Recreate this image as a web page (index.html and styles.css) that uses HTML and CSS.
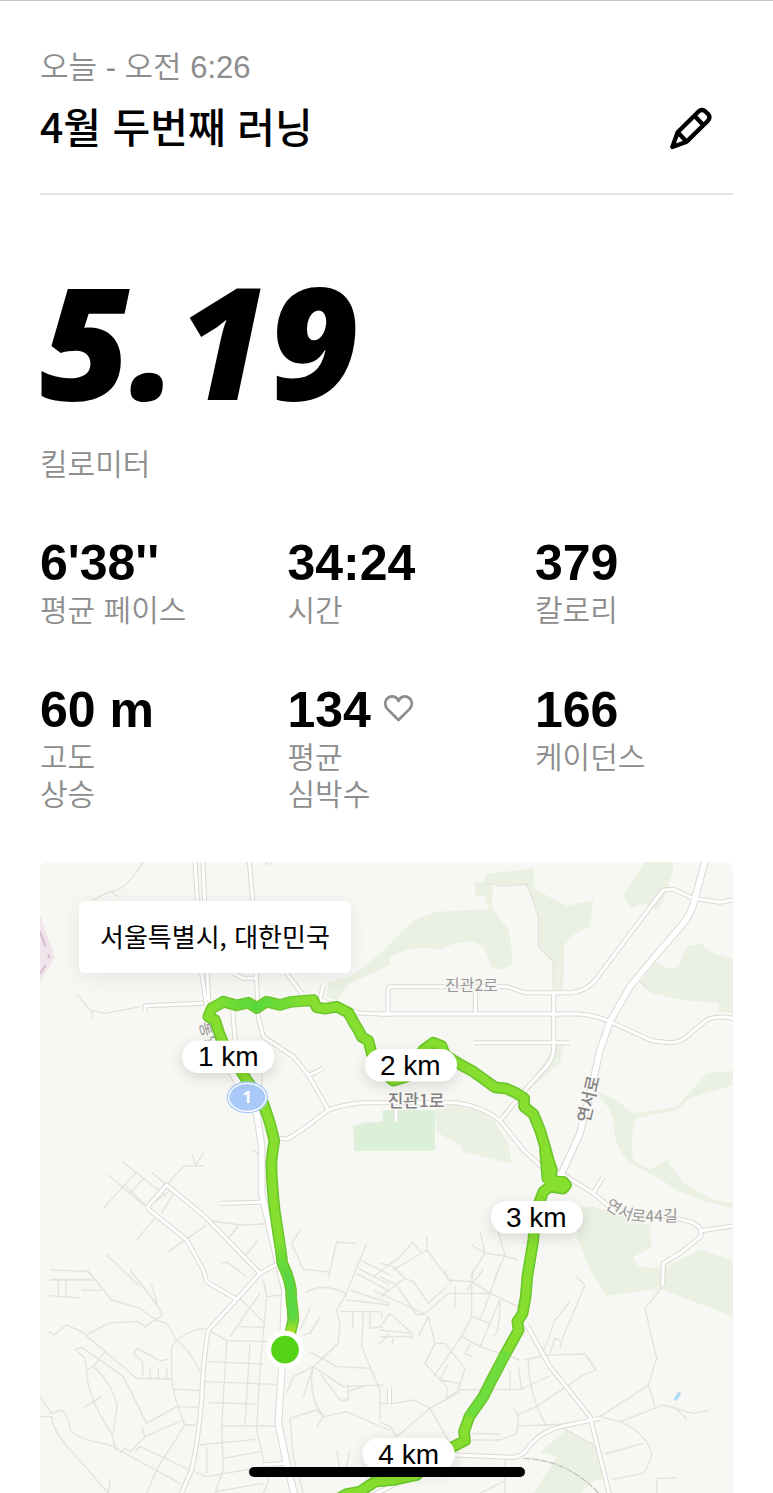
FILE: index.html
```html
<!DOCTYPE html>
<html lang="ko">
<head>
<meta charset="utf-8">
<meta name="viewport" content="width=device-width, initial-scale=1">
<title>4월 두번째 러닝</title>
<link rel="stylesheet" href="styles.css">
</head>
<body>
<main class="run">
  <header class="run-header">
    <div class="run-heading">
      <p class="run-date">오늘 - 오전 6:26</p>
      <h1 class="run-title">4월 두번째 러닝</h1>
    </div>
    <button class="edit-button" type="button" aria-label="이름 편집">
      <svg class="edit-icon" viewBox="84 79 135 135" aria-hidden="true">
        <path d="M97 202 113 158 175 96Q186 86 197 96L204 103Q213 113 203 124L140 186ZM113 158 140 186M163 108 190 136"/>
      </svg>
    </button>
  </header>

  <section class="distance">
    <p class="distance-value">5.19</p>
    <p class="label">킬로미터</p>
  </section>

  <section class="stats">
    <div class="stat"><p class="stat-value">6'38''</p><p class="label">평균 페이스</p></div>
    <div class="stat"><p class="stat-value">34:24</p><p class="label">시간</p></div>
    <div class="stat"><p class="stat-value">379</p><p class="label">칼로리</p></div>
    <div class="stat"><p class="stat-value">60 m</p><p class="label">고도<br>상승</p></div>
    <div class="stat">
      <p class="stat-value">134
        <svg class="heart-icon" viewBox="1088 518 92 88" aria-hidden="true"><path d="M1134 597 1100 563Q1089 549 1097 535 1106 523 1120 526 1130 529 1134 539 1138 529 1148 526 1162 523 1171 535 1179 549 1168 563Z"/></svg>
      </p>
      <p class="label">평균<br>심박수</p>
    </div>
    <div class="stat"><p class="stat-value">166</p><p class="label">케이던스</p></div>
  </section>

  <section class="map" aria-label="러닝 경로">
    <svg class="map-canvas" viewBox="30 36 2079 1893" preserveAspectRatio="xMidYMin slice">
      <defs>
        <g id="streets">
          <path d="M495 34 515 370 530 470M519 34 532 370 536 450M658 34 668 152 680 400 685 500 700 560 790 620 835 675 895 780M345 485V467L520 460M770 370 815 430M880 405 870 450 990 490 1080 493M610 370 640 385H680M608 480 615 570"/>
          <g transform="translate(1050)">
            <path d="M24 490V420Q24 410 35 410H380L435 428H570Q620 425 650 385L770 225 850 120 880 118 940 145 1020 157 1060 150M0 492H600Q650 497 690 515L815 572 870 578Q900 578 920 560L980 510Q1010 495 1060 505M286 428V490M521 428V600Q520 630 490 660L440 715 360 812M283 578H568"/>
          </g>
          <g transform="translate(0 630)">
            <path d="M740 235 770 237Q800 225 895 150 950 130 1000 128H1280Q1360 140 1410 182L1480 270 1540 325 1610 350 1690 400 1750 450 1940 475 1980 485Q2020 500 2012 530L1950 580 1900 610 1898 675M2012 512 2110 498M1690 400 1720 350M1098 150V185M840 45 880 25M572 430 695 427M350 443 410 375 525 470 690 640M350 443 470 540 520 630 530 665 620 718 690 640 745 610"/>
          </g>
          <g transform="translate(0 1260)">
            <path d="M620 88 535 180Q520 260 515 390 505 510 485 600L450 680M700 585 765 580M1490 165 1560 290 1680 440 1740 680M1278 555 1450 562Q1480 560 1500 525 1540 480 1600 468L1710 445M1078 350V400M1000 690 1160 610"/>
          </g>
        </g>
        <g id="avenues">
          <path d="M595 650 680 790 695 890V1030L745 1240 765 1320 755 1560 745 1720 770 1840 795 1940"/>
        </g>
        <path id="yeonseo" d="M2025 34 1995 145Q1985 190 1960 220L1870 325 1800 410 1740 515 1710 600 1690 690 1650 850 1595 970"/>
        <path id="route" d="M778 1465 784 1435 790 1410 788 1380 784 1350 783 1320 778 1295 770 1270 757 1240 752 1200 746 1160 740 1120 734 1080 730 1040 726 990 724 940 728 905 733 872 720 820 700 760 650 690 625 650 580 580 568 550 555 510 535 500 545 475 565 464 580 455 620 466 655 458 680 474 710 455 750 465 780 456 850 450 860 472 885 476 920 470 955 488 970 515 988 545 995 560 1015 572 1025 610 1050 660 1090 692 1130 680 1180 600 1210 578 1235 588 1245 615 1285 640 1330 665 1395 712 1430 716 1460 730 1483 745 1482 770 1510 792 1530 840 1545 890 1556 930 1566 960 1562 990 1600 995 1608 1005 1600 1016 1560 1010 1540 1025 1515 1090 1510 1170 1492 1280 1487 1340 1478 1390 1462 1415 1466 1440 1430 1505 1385 1590 1360 1640 1318 1700 1302 1745 1305 1772 1270 1790 1200 1830 1160 1875 1090 1890 1035 1895 990 1925 950 1932 900 1960"/>
        <linearGradient id="pace" gradientUnits="userSpaceOnUse" x1="0" y1="1455" x2="0" y2="1160">
          <stop offset="0" stop-color="#c2e225"/><stop offset=".18" stop-color="#5cd843"/><stop offset=".6" stop-color="#59d643"/><stop offset="1" stop-color="#86df2e"/>
        </linearGradient>
        <linearGradient id="pace-north" gradientUnits="userSpaceOnUse" x1="540" y1="0" x2="840" y2="0">
          <stop offset="0" stop-color="#86df2e"/><stop offset=".45" stop-color="#58d83e"/><stop offset="1" stop-color="#86df2e"/>
        </linearGradient>
        <path id="yeonseo-44" d="M1724 1072Q1780 1116 1840 1116L1950 1114"/>
        <filter id="pill-shadow" x="-30%" y="-50%" width="160%" height="230%">
          <feDropShadow dx="0" dy="12" stdDeviation="20" flood-opacity=".14"/>
        </filter>
      </defs>

      <g class="woods">
        <path d="M895 395 960 380 1080 290V345L960 400 920 450 890 440Z"/>
        <g transform="translate(1050)">
          <path d="M0 345 20 330Q90 280 180 298 290 245 320 310 335 360 350 360L395 348Q400 300 385 240 350 190 335 170L340 105H320L440 103Q455 130 475 200L478 290 520 340 525 425H550L552 290Q570 250 630 232L640 150 560 168 460 115 463 55 318 72 312 95 285 100V137H312L325 178 170 185 105 210 40 270 0 315Z"/>
          <path d="M795 34H880V60L850 150 835 180 790 160 755 175 730 135ZM920 290 960 280 1000 310 1060 328V490L1018 485 1015 458 920 452 815 430 780 395 830 335Q860 365 895 350ZM525 585H550L540 640 430 735 440 715Z"/>
        </g>
        <g transform="translate(1050 630)">
          <path d="M165 150 185 135Q300 140 340 180L385 250 395 312 250 275 245 260 170 215ZM650 95Q700 110 760 160L890 140 980 40 1060 32V75L930 115 890 150 770 175Q745 230 760 300L810 330 860 300 910 370 1000 420 1060 430V445L980 425 900 395 820 345 750 310Q700 260 700 180L690 150ZM600 440H640L810 495 815 560 760 590 775 620 850 625 960 570 1060 600V770L850 690H800L680 708 630 630 590 530Z"/>
          <path d="M560 1110 640 1150 680 1255 640 1262 600 1300H460L530 1190 480 1175Z"/>
        </g>
      </g>
      <path class="park" d="M970 830 1000 818 1058 815V780H1215V902H972Z"/>
      <g class="rail-yard"><path d="M30 195 75 320 30 395Z"/><path class="rail" d="M30 245 47 290M54 312 60 326M47 345 30 370"/></g>

      <g class="lanes">
        <path d="M340 36Q290 120 240 125L185 152M245 125 265 143M140 430 180 480 225 490 330 470M187 480V508M710 34V45M722 34V45"/>
        <path transform="translate(1050)" d="M320 100 365 108 440 103 455 140 475 200V290L520 335V425M780 395 802 418"/>
        <g transform="translate(0 630)">
          <path d="M275 303 410 410M235 345 395 480M220 445 320 335M285 375 350 440M300 400 340 355M363 335 410 375 460 318H520M498 318 487 283M498 315 522 277M355 440 435 380M395 460 430 400M320 538 375 475M412 577 530 495M525 480 630 495 705 492M590 540 625 498M645 588 683 542M575 612 590 605 650 650M228 583 330 680M62 630 172 634 200 665M62 658H182M665 270 685 280M695 40V80M785 550 820 628 895 636M895 655 920 546 978 550M940 720 1010 550M990 600 1080 645M985 625 1080 675M980 640 1080 695M785 550 812 508"/>
        </g>
        <g transform="translate(0 1260)">
          <path d="M60 30H190M85 30V78M108 30V80M58 77 152 84M155 60 215 62M172 0 245 90 330 115 375 148 395 140Q400 130 370 90L300 0M363 40 382 100M57 185 70 195 110 165 155 185 320 325 425 327V265Q420 230 440 210L410 160 375 150 345 170 325 155 240 158 170 193M440 210Q480 180 525 175M440 210Q480 240 510 305M338 320V275L310 250 322 235 390 272 415 268M360 295V325M385 295V325M410 295V325M135 238 165 265 170 300Q170 380 245 490L258 540M135 238 155 232 280 320 350 460 440 410M170 300 190 290Q240 330 262 405L250 490M190 290 225 245M162 412 215 380M30 380 65 430 95 420Q120 440 120 480 150 510 240 525L450 640M30 440H65Q70 490 130 550L235 669M270 550 285 535 300 545 345 500 335 470M315 545 330 530 480 600 530 620 700 590M345 500 460 450M350 669 385 590 465 465 495 465M425 330Q435 400 465 465M430 357 510 362M440 410 505 412M240 630 235 669"/>
          <path d="M700 30 710 80 690 300 680 480 715 635 700 669M710 80 755 75M630 85 705 160M690 70 600 200M535 180 590 212 720 215M625 170 705 172M590 212 575 470 580 600 555 669M535 275 700 282M525 335 735 343M535 398 680 402M660 220 645 465M575 468H735M505 525 675 508M580 565 690 545M530 530V610M555 665 700 640M825 70Q870 35 950 70L920 120 930 160 925 220 850 290 820 380M930 125H1055V145M968 125V175M1000 125 995 230 1050 360M1020 125V175L1060 170M1080 190 1045 225M870 140 840 190 820 195M840 115 810 180M840 245 920 290 1020 295M850 290 940 350 1060 345M850 290Q830 370 880 440L860 470M770 370 790 320 850 290M780 445 860 420 880 440 950 425 1040 465 1080 480M780 445 790 560 820 669M870 310 930 390H955V340M950 365 1000 350M920 540 930 600M960 540 945 610M950 90 1080 105M960 60 1080 100M1050 360V450M1080 500 1000 560"/>
        </g>
        <g transform="translate(1050 1260)">
          <path d="M0 20 50 45 110 135 135 132 205 70H330L415 110M0 80 75 25 100 35 145 100 200 50M-20 60 130 130M75 25 40 -10 0 -20M0 180 95 190V210M0 200H95M30 130 95 190M38 205V225M30 130 0 170M115 200 145 140 165 220 195 220 255 295 235 360 200 385V350L135 280 165 220M205 280 180 330 240 340M195 0 205 30 275 35 330 70 355 0M225 50V115M275 40V140L330 160 300 230 245 200 275 140M245 200 160 320M300 230 420 270M270 220 255 250 275 260M300 230 360 90M360 90Q360 190 340 200M330 70 300 150M280 0 275 35M240 360 420 358 510 318M390 305V355M415 290 425 360M445 270Q445 370 500 470M435 270 500 255 615 252 648 300 610 315 470 410 410 435M400 415 415 435 410 490 360 510H275M265 490 360 492M415 468 600 460M0 400 40 400 100 390 150 415 240 365M150 415 210 520M0 455 30 470 50 500 150 415M490 245 525 150 570 95M510 250 525 205 545 215 540 235M545 210 615 45 590 20"/>
          <path d="M850 15 840 60 795 115 830 265 805 345 660 440M805 345 825 410M660 440 720 455 850 405 940 430 985 422M885 412 920 447M720 455Q800 490 815 550 810 580 790 610L695 628M675 552 790 520M830 669V625L890 624M550 475 640 525M375 570V669M380 630 300 669M310 0 260 60"/>
          <path d="M100 -85 60 -40 -20 20M140 -100V-60L40 0M140 -60 215 40M95 -85 125 -50M275 -75 315 -50 375 -42 415 -30M300 -115 315 -50 270 20M355 -115 375 -42 345 20M430 -80 500 -120"/>
        </g>
      </g>
      <path class="railway" d="M1480 1825Q1620 1830 1715 1940"/>
      <path class="water" d="M1935 1650 1950 1628"/>

      <use class="street-edge" href="#streets"/>
      <use class="avenue-edge" href="#avenues"/>
      <use class="avenue-edge" href="#yeonseo"/>
      <use class="street" href="#streets"/>
      <use class="avenue" href="#avenues"/>
      <use class="avenue" href="#yeonseo"/>

      <g class="street-names">
        <text x="1245" y="423">진관2로</text>
        <text class="strong" x="1073" y="771">진관1로</text>
        <text class="strong" transform="translate(1678 820) rotate(-77)">연서로</text>
        <text transform="translate(508 520) rotate(76)">통일로</text>
        <text><textPath href="#yeonseo-44">연서로44길</textPath></text>
      </g>

      <use class="route-edge" href="#route"/>
      <path class="route-edge" d="M1545 900 1552 985"/>
      <use class="route" href="#route"/>
      <path class="route-tint" stroke="url(#pace)" d="M778 1465 784 1435 790 1410 788 1380 784 1350 783 1320 778 1295 770 1270 757 1240 752 1200 746 1160"/>
      <path class="route-tint" stroke="url(#pace-north)" d="M545 475 565 464 580 455 620 466 655 458 680 474 710 455 750 465 780 456 840 451"/>
      <path class="route-tint" stroke="#6fdc3e" d="M1430 1505 1385 1590 1360 1640 1318 1700"/>
      <path class="route" d="M1545 900 1552 990 1600 1005"/>

      <g class="shield">
        <ellipse cx="652" cy="742" rx="62" ry="48"/>
        <ellipse class="shield-ring" cx="652" cy="742" rx="56" ry="42"/>
        <text x="652" y="758">1</text>
      </g>
      <circle class="start" cx="765" cy="1499" r="49"/>

      <g class="pills">
        <rect x="457" y="572" width="276" height="97" rx="48"/><text x="595" y="649">1 km</text>
        <rect x="1005" y="597" width="276" height="97" rx="48"/><text x="1141" y="674">2 km</text>
        <rect x="1383" y="1053" width="276" height="97" rx="48"/><text x="1519" y="1130">3 km</text>
        <rect x="998" y="1764" width="276" height="97" rx="48"/><text x="1136" y="1842">4 km</text>
      </g>
    </svg>
    <p class="map-place">서울특별시, 대한민국</p>
  </section>
</main>
<div class="home-indicator"></div>
</body>
</html>
```
FILE: styles.css
```css
* {
  box-sizing: border-box;
}

body {
  margin: 0;
  background: #fff;
  color: #000;
  font-family: "Liberation Sans", "Noto Sans CJK KR", sans-serif;
}

p,
h1 {
  margin: 0;
}

.run {
  display: flex;
  flex-direction: column;
  min-height: 100vh;
  padding: 48px 40px 0;
  border-top: 1px solid #c6c6c8;
}

.run-header {
  display: flex;
  align-items: flex-end;
  justify-content: space-between;
  padding-bottom: 38px;
  border-bottom: 2px solid #e4e4e4;
}

.run-date,
.label {
  color: #8d8d8d;
  font-size: 30px;
  font-weight: 350;
  line-height: 37px;
}

.run-date {
  font-size: 31px;
}

.run-title {
  margin-top: 9px;
  font-family: "Noto Sans CJK KR", sans-serif;
  font-size: 41px;
  font-weight: 500;
  line-height: 60px;
}

.edit-button {
  display: flex;
  margin-right: 12px;
  padding: 4px 8px;
  border: 0;
  background: none;
  color: inherit;
}

.edit-icon {
  width: 45px;
  height: 45px;
  fill: none;
  stroke: currentColor;
  stroke-width: 13;
  stroke-linejoin: round;
}

.distance {
  margin-top: 85px;
}

.distance-value {
  margin-bottom: 46px;
  font-family: "Open Sans", sans-serif;
  font-size: 156px;
  font-style: italic;
  font-weight: 800;
  line-height: 120px;
}

.stats {
  display: grid;
  grid-template-columns: 5fr 5fr 4fr;
  row-gap: 57px;
  margin-top: 56px;
}

.stat-value {
  display: flex;
  align-items: center;
  gap: 12px;
  margin-bottom: 5px;
  font-size: 50px;
  font-weight: 700;
  line-height: 48px;
}

.stat:nth-child(n + 4) .label {
  min-height: 74px;
}

.heart-icon {
  width: 31px;
  height: 29px;
  margin-bottom: 4px;
  fill: none;
  stroke: #8d8d8d;
  stroke-width: 8;
  stroke-linejoin: round;
}

.map {
  position: relative;
  flex: 1;
  min-height: 631px;
  margin-top: 49px;
  overflow: hidden;
  border-radius: 8px 8px 0 0;
  background: #f7f8f3;
}

.map-canvas {
  position: absolute;
  inset: 0;
  width: 100%;
  height: 100%;
  fill: none;
  stroke-linejoin: round;
}

.map-place {
  position: absolute;
  top: 39px;
  left: 39px;
  padding: 17px 21px 19px;
  border-radius: 6px;
  background: #fff;
  box-shadow: 0 4px 20px rgba(0, 0, 0, 0.08);
  font-family: "Noto Sans CJK KR", sans-serif;
  font-size: 26px;
  line-height: 36px;
}

.woods {
  fill: #eaf0e2;
}

.park {
  fill: #dcefd9;
}

.rail-yard {
  fill: #f0e5ea;
}

.rail {
  stroke: #d9bcd2;
  stroke-width: 6;
}

.lanes {
  stroke: #e5e1dd;
  stroke-width: 4;
}

.railway {
  stroke: #c4c4c0;
  stroke-width: 4;
  stroke-dasharray: 22 4;
}

.water {
  stroke: #aadcf5;
  stroke-width: 10;
}

.street-edge {
  stroke: #ddd8d5;
  stroke-width: 15;
}

.street {
  stroke: #fff;
  stroke-width: 9;
}

.avenue-edge {
  stroke: #ddd8d5;
  stroke-width: 23;
}

.avenue {
  stroke: #fff;
  stroke-width: 17;
}

.street-names {
  fill: #9a9698;
  font-family: "Noto Sans CJK KR", sans-serif;
  font-size: 48px;
  paint-order: stroke;
  stroke: #f7f8f3;
  stroke-width: 8;
}

.street-names .strong {
  fill: #858285;
  font-size: 51px;
  font-weight: 500;
}

.route-edge {
  stroke: #6cc62c;
  stroke-width: 35;
  stroke-linecap: round;
}

.route {
  stroke: #86df2e;
  stroke-width: 25;
  stroke-linecap: round;
}

.route-tint {
  stroke-width: 25;
}

.shield {
  fill: #a9c9f8;
}

.shield-ring {
  stroke: #fff;
  stroke-width: 4;
}

.shield text {
  fill: #fff;
  font-family: "Open Sans", sans-serif;
  font-size: 50px;
  font-weight: 700;
  text-anchor: middle;
}

.start {
  fill: #54d414;
  stroke: #fff;
  stroke-width: 15;
}

.pills rect {
  fill: #fff;
  filter: url(#pill-shadow);
}

.pills text {
  fill: #000;
  font-size: 84px;
  text-anchor: middle;
}

.home-indicator {
  position: fixed;
  bottom: 16px;
  left: 50%;
  width: 276px;
  height: 10px;
  border-radius: 5px;
  background: #000;
  transform: translateX(-50%);
}
```
